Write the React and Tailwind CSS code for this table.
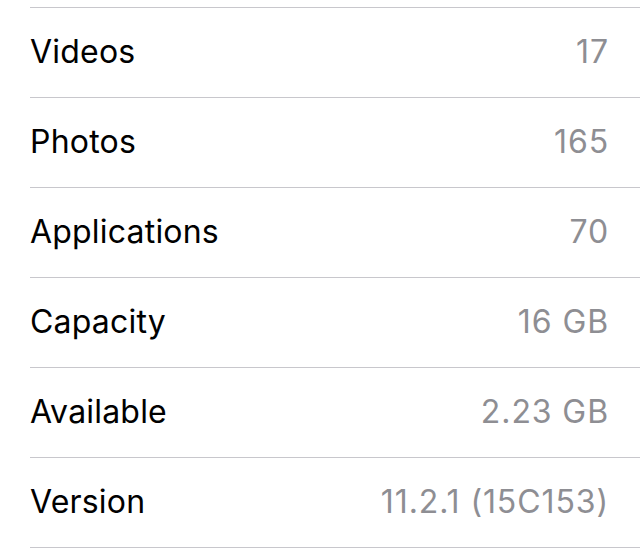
export default function App() {
  const rows = [
    ["Videos", "17"],
    ["Photos", "165"],
    ["Applications", "70"],
    ["Capacity", "16 GB"],
    ["Available", "2.23 GB"],
    ["Version", "11.2.1 (15C153)"],
  ];
  return (
    <div className="w-[640px] h-[551px] bg-white overflow-hidden pt-[7px]" style={{ fontFamily: "Inter, 'Liberation Sans', sans-serif" }}>
      {rows.map(([k, v]) => (
        <div key={k} className="ml-[30px] h-[90px] border-t border-[#c8c7cc] flex items-center justify-between pr-[31px] pb-px">
          <span className="text-[32px] tracking-[0.2px] text-black">{k}</span>
          <span className="text-[32px] tracking-[0.9px] text-[#8e8e93]">{v}</span>
        </div>
      ))}
      <div className="ml-[30px] border-t border-[#c8c7cc]" />
    </div>
  );
}
